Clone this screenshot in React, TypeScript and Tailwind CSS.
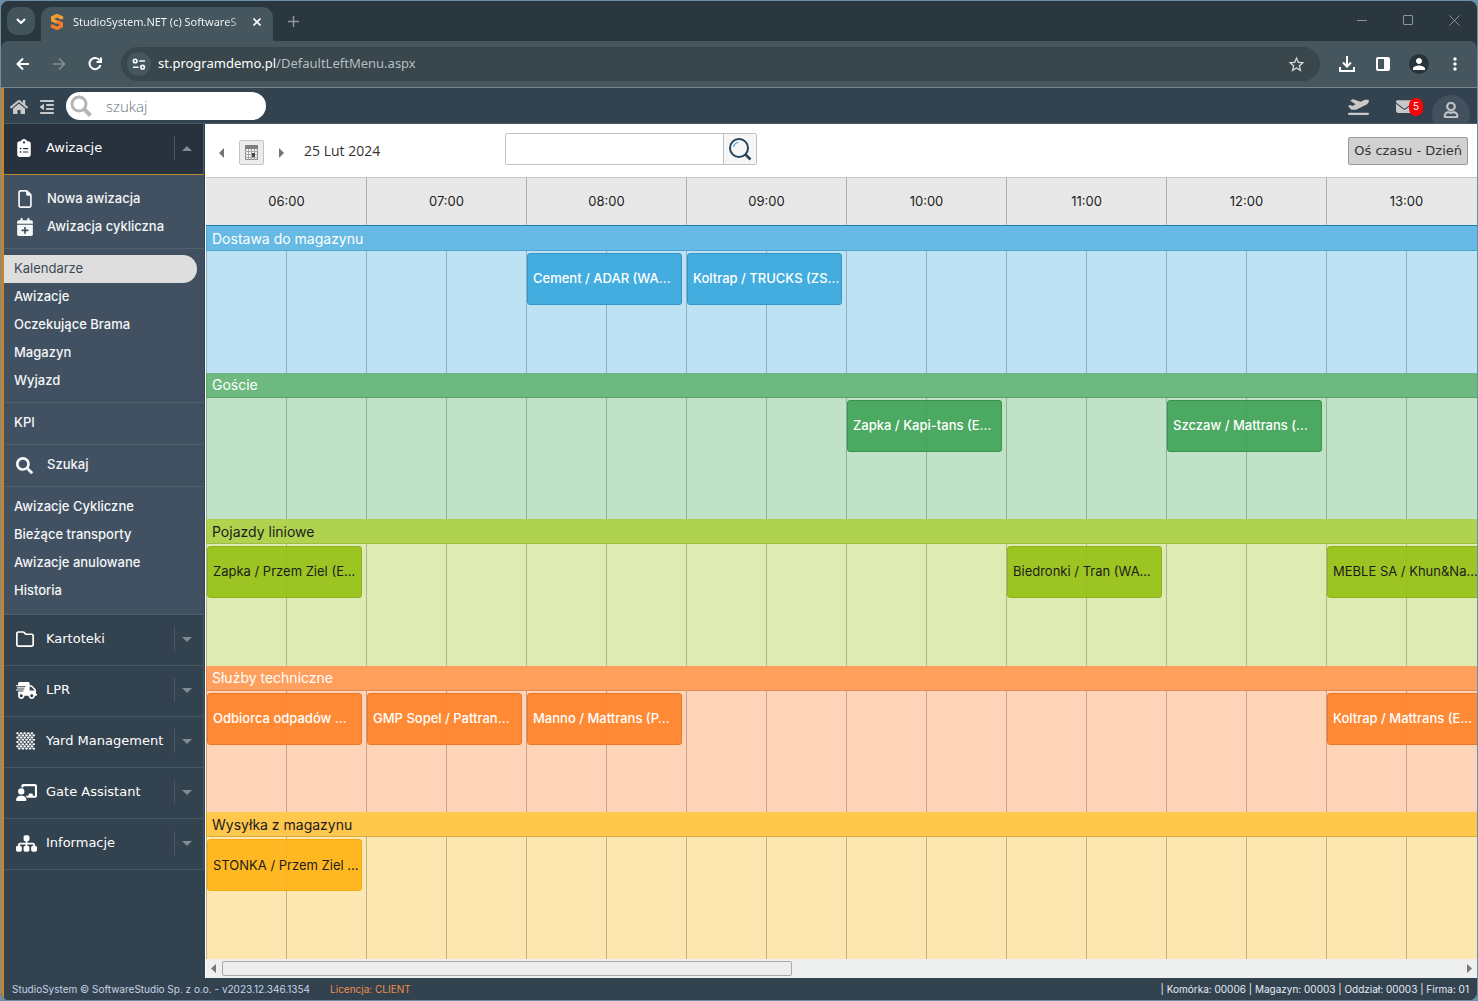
import React from "react";
import {
  FaChalkboardUser,
  FaClipboardList,
  FaCalendarPlus,
  FaEnvelope,
  FaOutdent,
  FaPlaneDeparture,
  FaRegFile,
  FaRegFolder,
  FaSitemap,
} from "react-icons/fa6";
import { FaHome, FaRegUser, FaSearch, FaShippingFast } from "react-icons/fa";
import { MdPerson, MdStarBorder, MdMoreVert } from "react-icons/md";

/* ---------- Browser chrome ---------- */

function Favicon() {
  return (
    <svg width="14" height="18" viewBox="0 0 14 18" fill="none" strokeWidth="3.4" aria-hidden="true">
      <path d="M11.500 6.200V4.600L7 2.600L2.700 4.600V7.200L7 9.200" stroke="#f5a033" />
      <path d="M7 8.600L11.300 10.600V13.200L7 15.400L2.500 13.400V11.600" stroke="#ef7b2c" />
    </svg>
  );
}

function TuneIcon() {
  return (
    <svg width="14" height="14" viewBox="0 0 14 14" fill="none" stroke="#fff" strokeWidth="1.6" aria-hidden="true">
      <circle cx="3.2" cy="4" r="1.8" />
      <path d="M7.2 4H13M1 10.2h5.6" />
      <circle cx="10.6" cy="10.2" r="1.8" />
    </svg>
  );
}

function TabStrip() {
  return (
    <div className="flex h-10 items-end bg-[#2a373e] pl-1.5">
      <button aria-label="Szukaj kart" className="mb-1.5 flex size-7 items-center justify-center rounded-[10px] bg-[#43545b]">
        <svg width="10" height="6" viewBox="0 0 10 6" fill="none" stroke="#fff" strokeWidth="2" aria-hidden="true">
          <path d="M1 1l4 4 4-4" />
        </svg>
      </button>
      <div className="ml-1.5 flex h-[34px] w-[232px] items-center rounded-t-[10px] bg-[#45565e] pr-2 pl-[9px] pb-1">
        <Favicon />
        <span className="ml-[9px] flex-1 bg-linear-to-r from-white from-85% to-white/20 bg-clip-text text-[11px] whitespace-nowrap text-transparent">
          StudioSystem.NET (c) SoftwareS
        </span>
        <button aria-label="Zamknij kartę" className="flex size-4 items-center justify-center">
          <svg width="8" height="8" viewBox="0 0 8 8" stroke="#fff" strokeWidth="1.6" aria-hidden="true">
            <path d="M.5.5l7 7M7.5.5l-7 7" />
          </svg>
        </button>
      </div>
      <button aria-label="Nowa karta" className="mb-3 ml-3 flex size-4 items-center justify-center">
        <svg width="11" height="11" viewBox="0 0 11 11" stroke="#8b979c" strokeWidth="1.5" aria-hidden="true">
          <path d="M5.5 0v11M0 5.5h11" />
        </svg>
      </button>
      <div className="mb-4 ml-auto flex items-center gap-9 pr-[18px]">
        <button aria-label="Minimalizuj" className="flex h-2.5 w-2.5 items-center">
          <span className="h-px w-full bg-[#8b979c]" />
        </button>
        <button aria-label="Maksymalizuj" className="size-2.5 rounded-[1px] border border-[#8b979c]" />
        <button aria-label="Zamknij" className="size-2.5">
          <svg width="11" height="11" viewBox="0 0 11 11" stroke="#8b979c" aria-hidden="true">
            <path d="M.5.5l10 10M10.5.5l-10 10" />
          </svg>
        </button>
      </div>
    </div>
  );
}

function AddressBar() {
  return (
    <div className="flex h-[47px] items-center rounded-t-lg border-b border-[#78878d] bg-[#45565e] pl-[13px] pr-[11px] text-white">
      <button aria-label="Wstecz">
        <svg width="18" height="18" viewBox="0 0 18 18" fill="none" stroke="#fff" strokeWidth="2" aria-hidden="true">
          <path d="M15 9H4M9 3.500L3.500 9L9 14.500" />
        </svg>
      </button>
      <button aria-label="Dalej" className="ml-[18px]">
        <svg width="18" height="18" viewBox="0 0 18 18" fill="none" stroke="#83929a" strokeWidth="1.6" aria-hidden="true">
          <path d="M3 9h11M9 3.500L14.500 9L9 14.500" />
        </svg>
      </button>
      <button aria-label="Odśwież" className="ml-[18px]">
        <svg width="18" height="18" viewBox="0 0 18 18" fill="none" stroke="#fff" strokeWidth="2" aria-hidden="true">
          <path d="M13.800 5.500A5.600 5.600 0 1 0 14.500 10" />
          <path d="M15 2.500V7H10.500" />
        </svg>
      </button>
      <div className="ml-[17px] flex h-[34px] flex-1 items-center rounded-full bg-[#39474d] pl-1.5 pr-3.5">
        <button aria-label="Informacje o witrynie" className="flex size-6 items-center justify-center rounded-full bg-[#45565e]">
          <TuneIcon />
        </button>
        <span className="ml-[7px] flex-1 text-[13px] text-[#b4bec2]">
          <span className="text-white">st.programdemo.pl</span>/DefaultLeftMenu.aspx
        </span>
        <button aria-label="Dodaj zakładkę">
          <MdStarBorder size={19} color="#d3dadd" />
        </button>
      </div>
      <div className="ml-4 flex items-center gap-3.5">
        <button aria-label="Pobrane">
          <svg width="22" height="18" viewBox="0 0 22 18" fill="none" stroke="#fff" strokeWidth="2" aria-hidden="true">
            <path d="M11 1v10M7 7.5l4 4 4-4M4 12v4h14v-4" />
          </svg>
        </button>
        <button aria-label="Panel boczny">
          <svg width="22" height="18" viewBox="0 0 22 18" aria-hidden="true">
            <rect x="5" y="3" width="12" height="12" fill="none" stroke="#fff" strokeWidth="2" rx="1" />
            <path d="M12 3h5v12h-5z" fill="#fff" />
          </svg>
        </button>
        <button aria-label="Profil" className="flex size-[22px] items-center justify-center">
          <span className="flex size-5 items-center justify-center rounded-full bg-[#28343a]">
            <MdPerson size={18} />
          </span>
        </button>
        <button aria-label="Menu" className="flex w-[22px] justify-center">
          <MdMoreVert size={20} />
        </button>
      </div>
    </div>
  );
}

/* ---------- Application header ---------- */

function AppHeader() {
  return (
    <header className="flex h-9 items-center border-b border-[#4a5b68] bg-[#33424f] pt-px pl-1.5 pr-[7px] text-[#c8c8c8]">
      <button aria-label="Strona główna" className="pt-px">
        <FaHome size={18} />
      </button>
      <button aria-label="Zwiń menu" className="ml-[11px] pt-px">
        <FaOutdent size={16} />
      </button>
      <label className="ml-[11px] flex h-7 w-50 items-center rounded-full bg-white pl-1">
        <svg width="22" height="22" viewBox="0 0 22 22" fill="none" stroke="#b5b5b5" aria-hidden="true">
          <circle cx="9" cy="9" r="7" strokeWidth="3" />
          <path d="M14 14l6.5 6.5" strokeWidth="4" />
        </svg>
        <input
          aria-label="szukaj"
          placeholder="szukaj"
          className="ml-3.5 w-36 bg-transparent font-['Open_Sans',sans-serif] text-[15px] font-light text-gray-600 outline-none placeholder:text-gray-500"
        />
      </label>
      <button aria-label="Awizacje" className="ml-auto">
        <FaPlaneDeparture size={21} />
      </button>
      <button aria-label="Wiadomości" className="ml-[27px] flex items-center pt-px">
        <FaEnvelope size={17} />
        <span className="-ml-1 flex h-[18px] w-3.5 items-center justify-center rounded-full bg-[#f80408] text-[10px] text-white">5</span>
      </button>
      <div className="ml-[9px] flex h-full items-end overflow-hidden">
        <button
          aria-label="Konto"
          className="-mb-2.5 flex size-[38px] items-center justify-center rounded-full bg-[#43515f] pb-2"
        >
          <FaRegUser size={16} stroke="currentColor" strokeWidth={20} />
        </button>
      </div>
    </header>
  );
}

/* ---------- Side menu ---------- */

function CheckerIcon() {
  const dots: React.ReactElement[] = [];
  for (let r = 0; r < 8; r++) {
    for (let c = 0; c < 5; c++) {
      dots.push(<ellipse key={`${r}-${c}`} cx={1.5 + c * 3.6 + (r % 2) * 1.8} cy={1.2 + r * 2.2} rx="1.35" ry="1.05" />);
    }
  }
  return (
    <svg width="19" height="18" viewBox="0 0 19 18" fill="#fff" aria-hidden="true">
      {dots}
    </svg>
  );
}

type Entry = { label: string; icon?: React.ReactNode; active?: boolean };

const groups: Entry[][] = [
  [
    { label: "Nowa awizacja", icon: <FaRegFile size={18} /> },
    { label: "Awizacja cykliczna", icon: <FaCalendarPlus size={18} /> },
  ],
  [
    { label: "Kalendarze", active: true },
    { label: "Awizacje" },
    { label: "Oczekujące Brama" },
    { label: "Magazyn" },
    { label: "Wyjazd" },
  ],
  [{ label: "KPI" }],
  [{ label: "Szukaj", icon: <FaSearch size={17} /> }],
  [{ label: "Awizacje Cykliczne" }, { label: "Bieżące transporty" }, { label: "Awizacje anulowane" }, { label: "Historia" }],
];

const sections: Entry[] = [
  { label: "Kartoteki", icon: <FaRegFolder size={18} /> },
  { label: "LPR", icon: <FaShippingFast size={21} /> },
  { label: "Yard Management", icon: <CheckerIcon /> },
  { label: "Gate Assistant", icon: <FaChalkboardUser size={21} /> },
  { label: "Informacje", icon: <FaSitemap size={21} /> },
];

function SectionHead({ label, icon, open }: { label: string; icon: React.ReactNode; open?: boolean }) {
  return (
    <button
      aria-expanded={!!open}
      className={
        open
          ? "flex h-[51px] w-full items-center border-r border-b border-r-[#4a5b68] border-b-[#b98a2e] bg-[#28313e] pb-0.5 pl-[11px] text-left text-[13px] font-medium text-white"
          : "flex h-[51px] w-full items-center border-r border-b border-[#465764] pb-0.5 pl-3 text-left text-[13px] font-medium text-white"
      }
    >
      <span className={open ? "flex w-[31px]" : "flex w-[30px]"}>{icon}</span>
      <span className="flex-1 whitespace-nowrap font-['DejaVu_Sans',sans-serif]">{label}</span>
      <span className="flex h-6 w-[29px] items-center justify-center border-l border-[#4a5965] pr-1">
        <svg width="10" height="5" viewBox="0 0 10 5" fill="#828b93" aria-hidden="true">
          {open ? <path d="M0 5L5 0l5 5z" /> : <path d="M0 0l5 5 5-5z" />}
        </svg>
      </span>
    </button>
  );
}

function Sidebar() {
  return (
    <nav className="w-[201px] shrink-0 bg-[#33424f] pr-px">
      <SectionHead label="Awizacje" icon={<FaClipboardList size={18} />} open />
      <div className="border-b border-[#4d5d69] bg-[#415161] pt-1 pb-0.5">
        {groups.map((group, i) => (
          <ul key={i} className="border-b border-[#51616f] pt-1.5 pb-[7px] last:border-b-0">
            {group.map((e) => (
              <li key={e.label}>
                <a
                  href="#"
                  className={
                    e.active
                      ? "mr-[7px] flex h-7 items-center rounded-r-full bg-[#dedede] pl-2.5 text-[13px] text-[#3c4854]"
                      : "flex h-7 items-center pl-2.5 text-[13px] font-medium text-[#f4f6f8]"
                  }
                >
                  {e.icon && <span className="flex w-[33px] pl-0.5">{e.icon}</span>}
                  {e.label}
                </a>
              </li>
            ))}
          </ul>
        ))}
      </div>
      {sections.map((s) => (
        <SectionHead key={s.label} label={s.label} icon={s.icon} />
      ))}
    </nav>
  );
}

/* ---------- Timeline ---------- */

const hours = ["06:00", "07:00", "08:00", "09:00", "10:00", "11:00", "12:00", "13:00"];

type Lane = {
  name: string;
  bar: string;
  body: string;
  line: string;
  event: string;
  events: Record<string, string>;
};

const lanes: Lane[] = [
  {
    name: "Dostawa do magazynu",
    bar: "border-[#4aa3d0] bg-[#66bae4] text-white",
    body: "bg-[#bde2f4]",
    line: "border-[#8fb0c6]",
    event: "border-[#3595c8] bg-[#36a7de]/90 font-medium text-white",
    events: { "08:00": "Cement / ADAR (WA…", "09:00": "Koltrap / TRUCKS (ZS…" },
  },
  {
    name: "Goście",
    bar: "border-[#5aa56c] bg-[#6eb97f] text-white",
    body: "bg-[#c0e2c7]",
    line: "border-[#8fb098]",
    event: "border-[#38924b] bg-[#3fa355]/90 font-medium text-white",
    events: { "10:00": "Zapka / Kapi-tans (E…", "12:00": "Szczaw / Mattrans (…" },
  },
  {
    name: "Pojazdy liniowe",
    bar: "border-[#9dbd45] bg-[#b0d34f] text-[#1c1c1c]",
    body: "bg-[#deebb3]",
    line: "border-[#abb88a]",
    event: "border-[#8cb31e] bg-[#95c113]/90 text-[#1c1c1c]",
    events: {
      "06:00": "Zapka / Przem Ziel (E…",
      "11:00": "Biedronki / Tran (WA…",
      "13:00": "MEBLE SA / Khun&Na…",
    },
  },
  {
    name: "Służby techniczne",
    bar: "border-[#e08a55] bg-[#ff9f5e] text-white",
    body: "bg-[#fed4b8]",
    line: "border-[#c9a18a]",
    event: "border-[#ee7725] bg-[#ff8228]/90 font-medium text-white",
    events: {
      "06:00": "Odbiorca odpadów …",
      "07:00": "GMP Sopel / Pattran…",
      "08:00": "Manno / Mattrans (P…",
      "13:00": "Koltrap / Mattrans (E…",
    },
  },
  {
    name: "Wysyłka z magazynu",
    bar: "border-[#dcab41] bg-[#ffc74c] text-[#1c1c1c]",
    body: "bg-[#fde7b1]",
    line: "border-[#c4ae84]",
    event: "border-[#f5ab14] bg-[#ffb312]/90 text-[#1c1c1c]",
    events: { "06:00": "STONKA / Przem Ziel …" },
  },
];

function CalendarToolbar() {
  return (
    <div className="flex h-[54px] items-center border-b border-[#c4c4c4] bg-white pr-[9px] pl-[11px] font-['Open_Sans',sans-serif]">
      <button aria-label="Poprzedni dzień" className="mt-1 p-0.5">
        <svg width="5" height="10" viewBox="0 0 5 10" fill="#757575" aria-hidden="true">
          <path d="M5 0v10L0 5z" />
        </svg>
      </button>
      <button
        aria-label="Wybierz datę"
        className="mt-1 ml-[13px] flex size-[25px] items-center justify-center rounded-[2px] border border-[#c4c4c4] bg-[#ececec]"
      >
        <svg width="13" height="15" viewBox="0 0 13 15" aria-hidden="true">
          <path d="M.5.5h12v14H.5z" fill="#f2f2f2" stroke="#8a8a8a" />
          <path d="M0 0h13v4H0z" fill="#808080" />
          <path d="M3.500 4v11M6.500 4v11M9.500 4v11M0 6.500h13M0 9.500h13M0 12.500h13" stroke="#a8a8a8" />
          <path d="M7 8h3v4H7z" fill="#4a4a4a" />
        </svg>
      </button>
      <button aria-label="Następny dzień" className="mt-1 ml-[13px] p-0.5">
        <svg width="5" height="10" viewBox="0 0 5 10" fill="#757575" aria-hidden="true">
          <path d="M0 0v10l5-5z" />
        </svg>
      </button>
      <span className="ml-[18px] w-[201px] text-[14px] text-[#333]">25 Lut 2024</span>
      <form className="mb-1 flex h-8 w-[252px] overflow-hidden rounded-[2px] border border-[#c0c0c0]">
        <input aria-label="Szukaj awizacji" className="min-w-0 flex-1 bg-white px-2 text-[14px] outline-none" />
        <button
          type="button"
          aria-label="Szukaj"
          className="flex w-[33px] items-center justify-center border-l border-[#c0c0c0] bg-[#f6f6f6]"
        >
          <svg width="24" height="24" viewBox="0 0 24 24" fill="none" stroke="#24425a" aria-hidden="true">
            <circle cx="11" cy="11" r="9" strokeWidth="2" />
            <path d="M17 17l5.500 5.500" strokeWidth="2.500" />
            <path d="M5.500 10a5.500 5.500 0 0 1 5-4.500" stroke="#3f8fd0" strokeWidth="1.200" />
          </svg>
        </button>
      </form>
      <button className="ml-auto h-7 rounded-[2px] border border-[#9a9a9a] bg-[#d1d1d1] px-[5px] font-['DejaVu_Sans',sans-serif] text-[13px] whitespace-nowrap text-[#333]">
        Oś czasu - Dzień
      </button>
    </div>
  );
}

function Timeline() {
  return (
    <div className="flex min-h-0 flex-1 flex-col overflow-hidden">
      <div className="flex h-12 border-b border-[#1f7dad] bg-[#e8e8e8] pl-px">
        {hours.map((h) => (
          <div key={h} className="flex w-40 shrink-0 items-center justify-center border-r border-[#b0b0b0] text-[13px] text-[#222]">
            {h}
          </div>
        ))}
      </div>
      {lanes.map((lane) => (
        <section key={lane.name} aria-label={lane.name} className="flex min-h-[100px] flex-1 flex-col">
          <h2 className={`flex h-[25px] shrink-0 items-center border-b border-l pl-[5px] text-[14px] ${lane.bar}`}>{lane.name}</h2>
          <div className={`flex flex-1 border-l ${lane.body} ${lane.line}`}>
            {hours.map((h) => (
              <div key={h} className={`relative flex w-40 shrink-0 border-r ${lane.line}`}>
                <div className={`w-20 border-r ${lane.line}`} />
                {lane.events[h] && (
                  <button
                    className={`absolute top-0.5 left-0 h-[52px] w-[155px] rounded-[3px] border px-[5px] text-left text-[13px] whitespace-nowrap ${lane.event}`}
                  >
                    {lane.events[h]}
                  </button>
                )}
              </div>
            ))}
          </div>
        </section>
      ))}
    </div>
  );
}

function ScrollRail() {
  return (
    <div className="flex h-[19px] items-center bg-[#eeefef] px-[5px]">
      <svg width="5" height="9" viewBox="0 0 5 9" fill="#777" aria-hidden="true">
        <path d="M5 0v9L0 4.500z" />
      </svg>
      <div className="mx-1.5 flex flex-1">
        <div className="h-[15px] w-[46%] rounded-[2px] border border-[#a8a8a8] bg-[#ededed]" />
      </div>
      <svg width="5" height="9" viewBox="0 0 5 9" fill="#777" aria-hidden="true">
        <path d="M0 0v9l5-4.500z" />
      </svg>
    </div>
  );
}

function Footer() {
  return (
    <footer className="flex h-[22px] items-center bg-[#33424f] px-2 text-[10px] text-[#c6d3e6]">
      <span>StudioSystem © SoftwareStudio Sp. z o.o. - v2023.12.346.1354</span>
      <span className="ml-5 text-[#f08c4a]">Licencja: CLIENT</span>
      <span className="ml-auto text-[#e6ecf5]">| Komórka: 00006 | Magazyn: 00003 | Oddział: 00003 | Firma: 01</span>
    </footer>
  );
}

export default function App() {
  return (
    <div className="h-screen min-h-[760px] bg-[#6a8fa8] p-px font-['Inter',sans-serif]">
      <div className="flex h-full flex-col overflow-hidden rounded-lg bg-[#2a373e]">
        <div className="font-['Noto_Sans',sans-serif]">
          <TabStrip />
          <AddressBar />
        </div>
        <div className="flex min-h-0 flex-1 flex-col border-l-3 border-[#c9842a]">
          <AppHeader />
          <div className="flex min-h-0 flex-1">
            <Sidebar />
            <main className="flex min-w-0 flex-1 flex-col border-l border-white">
              <CalendarToolbar />
              <Timeline />
              <ScrollRail />
            </main>
          </div>
          <Footer />
        </div>
      </div>
    </div>
  );
}
